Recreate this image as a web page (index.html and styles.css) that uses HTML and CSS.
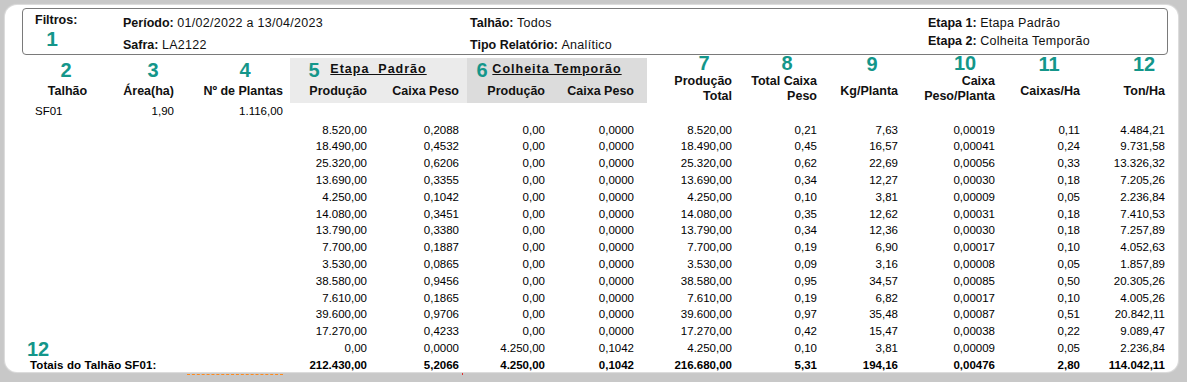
FILE: index.html
```html
<!DOCTYPE html>
<html lang="pt-BR">
<head>
<meta charset="utf-8">
<title>Relatório de Colheita</title>
<link rel="stylesheet" href="styles.css">
</head>
<body>
<div class="panel">
  <div class="filters">
    <div class="fcol fa"><b>Filtros:</b></div>
    <div class="fcol fb">
      <div><b>Período:</b> <span class="v">01/02/2022 a 13/04/2023</span></div>
      <div><b>Safra:</b> <span class="v">LA2122</span></div>
    </div>
    <div class="fcol fb fc">
      <div><b>Talhão:</b> <span class="v">Todos</span></div>
      <div><b>Tipo Relatório:</b> <span class="v">Analítico</span></div>
    </div>
    <div class="fcol fd">
      <div><b>Etapa 1:</b> <span class="v">Etapa Padrão</span></div>
      <div><b>Etapa 2:</b> <span class="v">Colheita Temporão</span></div>
    </div>
  </div>

  <div class="report">
    <div class="row head">
      <div class="h hc">Talhão</div>
      <div class="h">Área(ha)</div>
      <div class="h p7">Nº de Plantas</div>
      <div class="group ep">
        <div class="gtitle">Etapa  Padrão</div>
        <div class="gsub p8">Produção</div>
        <div class="gsub p8">Caixa Peso</div>
      </div>
      <div class="group ct">
        <div class="gtitle">Colheita Temporão</div>
        <div class="gsub p8">Produção</div>
        <div class="gsub p13">Caixa Peso</div>
      </div>
      <div class="h two">Produção<br>Total</div>
      <div class="h two">Total Caixa<br>Peso</div>
      <div class="h">Kg/Planta</div>
      <div class="h two">Caixa<br>Peso/Planta</div>
      <div class="h">Caixas/Ha</div>
      <div class="h">Ton/Ha</div>
    </div>

    <div class="row first">
      <div class="c name">SF01</div><div class="c">1,90</div><div class="c">1.116,00</div>
    </div>

    <div class="rows">
      <div class="row data"><div></div><div></div><div></div><div>8.520,00</div><div>0,2088</div><div>0,00</div><div>0,0000</div><div>8.520,00</div><div>0,21</div><div>7,63</div><div>0,00019</div><div>0,11</div><div>4.484,21</div></div>
      <div class="row data"><div></div><div></div><div></div><div>18.490,00</div><div>0,4532</div><div>0,00</div><div>0,0000</div><div>18.490,00</div><div>0,45</div><div>16,57</div><div>0,00041</div><div>0,24</div><div>9.731,58</div></div>
      <div class="row data"><div></div><div></div><div></div><div>25.320,00</div><div>0,6206</div><div>0,00</div><div>0,0000</div><div>25.320,00</div><div>0,62</div><div>22,69</div><div>0,00056</div><div>0,33</div><div>13.326,32</div></div>
      <div class="row data"><div></div><div></div><div></div><div>13.690,00</div><div>0,3355</div><div>0,00</div><div>0,0000</div><div>13.690,00</div><div>0,34</div><div>12,27</div><div>0,00030</div><div>0,18</div><div>7.205,26</div></div>
      <div class="row data"><div></div><div></div><div></div><div>4.250,00</div><div>0,1042</div><div>0,00</div><div>0,0000</div><div>4.250,00</div><div>0,10</div><div>3,81</div><div>0,00009</div><div>0,05</div><div>2.236,84</div></div>
      <div class="row data"><div></div><div></div><div></div><div>14.080,00</div><div>0,3451</div><div>0,00</div><div>0,0000</div><div>14.080,00</div><div>0,35</div><div>12,62</div><div>0,00031</div><div>0,18</div><div>7.410,53</div></div>
      <div class="row data"><div></div><div></div><div></div><div>13.790,00</div><div>0,3380</div><div>0,00</div><div>0,0000</div><div>13.790,00</div><div>0,34</div><div>12,36</div><div>0,00030</div><div>0,18</div><div>7.257,89</div></div>
      <div class="row data"><div></div><div></div><div></div><div>7.700,00</div><div>0,1887</div><div>0,00</div><div>0,0000</div><div>7.700,00</div><div>0,19</div><div>6,90</div><div>0,00017</div><div>0,10</div><div>4.052,63</div></div>
      <div class="row data"><div></div><div></div><div></div><div>3.530,00</div><div>0,0865</div><div>0,00</div><div>0,0000</div><div>3.530,00</div><div>0,09</div><div>3,16</div><div>0,00008</div><div>0,05</div><div>1.857,89</div></div>
      <div class="row data"><div></div><div></div><div></div><div>38.580,00</div><div>0,9456</div><div>0,00</div><div>0,0000</div><div>38.580,00</div><div>0,95</div><div>34,57</div><div>0,00085</div><div>0,50</div><div>20.305,26</div></div>
      <div class="row data"><div></div><div></div><div></div><div>7.610,00</div><div>0,1865</div><div>0,00</div><div>0,0000</div><div>7.610,00</div><div>0,19</div><div>6,82</div><div>0,00017</div><div>0,10</div><div>4.005,26</div></div>
      <div class="row data"><div></div><div></div><div></div><div>39.600,00</div><div>0,9706</div><div>0,00</div><div>0,0000</div><div>39.600,00</div><div>0,97</div><div>35,48</div><div>0,00087</div><div>0,51</div><div>20.842,11</div></div>
      <div class="row data"><div></div><div></div><div></div><div>17.270,00</div><div>0,4233</div><div>0,00</div><div>0,0000</div><div>17.270,00</div><div>0,42</div><div>15,47</div><div>0,00038</div><div>0,22</div><div>9.089,47</div></div>
      <div class="row data"><div></div><div></div><div></div><div>0,00</div><div>0,0000</div><div>4.250,00</div><div>0,1042</div><div>4.250,00</div><div>0,10</div><div>3,81</div><div>0,00009</div><div>0,05</div><div>2.236,84</div></div>
      <div class="row total"><div class="tlabel">Totais do Talhão SF01:</div><div>212.430,00</div><div>5,2066</div><div>4.250,00</div><div>0,1042</div><div>216.680,00</div><div>5,31</div><div>194,16</div><div>0,00476</div><div>2,80</div><div>114.042,11</div></div>
    </div>
  </div>

  <span class="mark m1">1</span>
  <span class="mark m2">2</span>
  <span class="mark m3">3</span>
  <span class="mark m4">4</span>
  <span class="mark m5">5</span>
  <span class="mark m6">6</span>
  <span class="mark m7">7</span>
  <span class="mark m8">8</span>
  <span class="mark m9">9</span>
  <span class="mark m10">10</span>
  <span class="mark m11">11</span>
  <span class="mark m12">12</span>
  <span class="mark m12b">12</span>
</div>
<div class="orange-mark"></div>
<div class="red-tick"></div>
</body>
</html>
```

FILE: styles.css
```css
html, body {
  margin: 0;
  padding: 0;
}
body {
  width: 1187px;
  height: 382px;
  overflow: hidden;
  background: #c8c8c8;
  font-family: "Liberation Sans", Arial, sans-serif;
  color: #000;
  position: relative;
}
.panel {
  position: relative;
  box-sizing: border-box;
  width: 1173px;
  height: 367px;
  margin: 5px 0 0 5px;
  padding: 3px 0 0 17px;
  background: #fff;
  border-radius: 12px;
  box-shadow: 0 0 1px 1px #dedede;
}

/* Filters box */
.filters {
  box-sizing: border-box;
  width: 1146px;
  height: 47px;
  border: 1px solid #7a7a7a;
  border-radius: 4px;
  display: flex;
  padding-left: 12px;
  font-size: 12.5px;
  color: #111;
}
.fcol { flex: none; }
.fa {
  width: 88px;
  padding-top: 3px;
  line-height: 17px;
}
.fb {
  width: 347px;
  padding-top: 3px;
  line-height: 22px;
}
.fc { width: 458px; }
.fd {
  padding-top: 4.5px;
  line-height: 18px;
}
.v { letter-spacing: 0.3px; }

/* Report grid */
.report {
  margin-top: 3px;
}
.row {
  display: grid;
  grid-template-columns: 86px 66px 116px 85px 92px 86px 94px 85px 85px 81px 97px 85px 85px;
  text-align: right;
}
.head {
  height: 45px;
  font-weight: bold;
  font-size: 12.5px;
  color: #111;
}
.h {
  display: flex;
  flex-direction: column;
  justify-content: flex-end;
  padding-bottom: 4px;
  line-height: 15px;
}
.h.two {
  padding-bottom: 0;
  line-height: 14.5px;
}
.hc { text-align: center; padding-left: 5px; }
.p7 { padding-right: 7px; }
.p8 { padding-right: 8px; }
.p13 { padding-right: 13px; }

.group {
  grid-column: span 2;
  display: grid;
  grid-template-rows: 20px 25px;
}
.ep {
  grid-template-columns: 85px 92px;
  background: #ebebeb;
}
.ct {
  grid-template-columns: 86px 94px;
  background: #dcdcdc;
}
.gtitle {
  grid-column: 1 / -1;
  text-align: center;
  line-height: 20px;
  text-decoration: underline;
  letter-spacing: 1px;
  white-space: pre;
  padding-top: 1px;
}
.gsub {
  align-self: end;
  line-height: 15px;
  padding-bottom: 4px;
}

.first {
  height: 17px;
  line-height: 17px;
  font-size: 11.5px;
}
.first .c:nth-child(3) { padding-right: 7px; }
.name {
  text-align: left;
  padding-left: 13px;
}

.rows {
  margin-top: 1.6px;
  font-size: 11.5px;
}
.data, .total {
  height: 16.8px;
  line-height: 16.8px;
}
.data > div:nth-child(4),
.data > div:nth-child(5),
.data > div:nth-child(6) { padding-right: 8px; }
.data > div:nth-child(7) { padding-right: 13px; }

.total { font-weight: bold; }
.tlabel {
  grid-column: span 3;
  text-align: left;
  padding-left: 8px;
  letter-spacing: 0.1px;
}
.total > div:nth-child(2),
.total > div:nth-child(3),
.total > div:nth-child(4) { padding-right: 8px; }
.total > div:nth-child(5) { padding-right: 13px; }

/* Annotation markers */
.mark {
  position: absolute;
  width: 40px;
  text-align: center;
  font-size: 20px;
  line-height: 14px;
  font-weight: bold;
  color: #14968a;
}
.m1 { left: 27px; top: 26.8px; font-size: 21px; }
.m2 { left: 41px; top: 58.4px; }
.m3 { left: 128px; top: 58.4px; }
.m4 { left: 220px; top: 58.4px; }
.m5 { left: 289px; top: 58.4px; }
.m6 { left: 457px; top: 58.4px; }
.m7 { left: 679px; top: 51px; }
.m8 { left: 762px; top: 51px; }
.m9 { left: 847px; top: 52.4px; }
.m10 { left: 940px; top: 51px; }
.m11 { left: 1024px; top: 52.4px; }
.m12 { left: 1119px; top: 52.4px; }
.m12b { left: 13px; top: 337.4px; }

.orange-mark {
  position: absolute;
  left: 187px;
  top: 374px;
  width: 96px;
  height: 0;
  border-top: 1px dashed #ff8a1c;
}
.red-tick {
  position: absolute;
  left: 462px;
  top: 373px;
  width: 1px;
  height: 2px;
  background: #e03030;
}
```
